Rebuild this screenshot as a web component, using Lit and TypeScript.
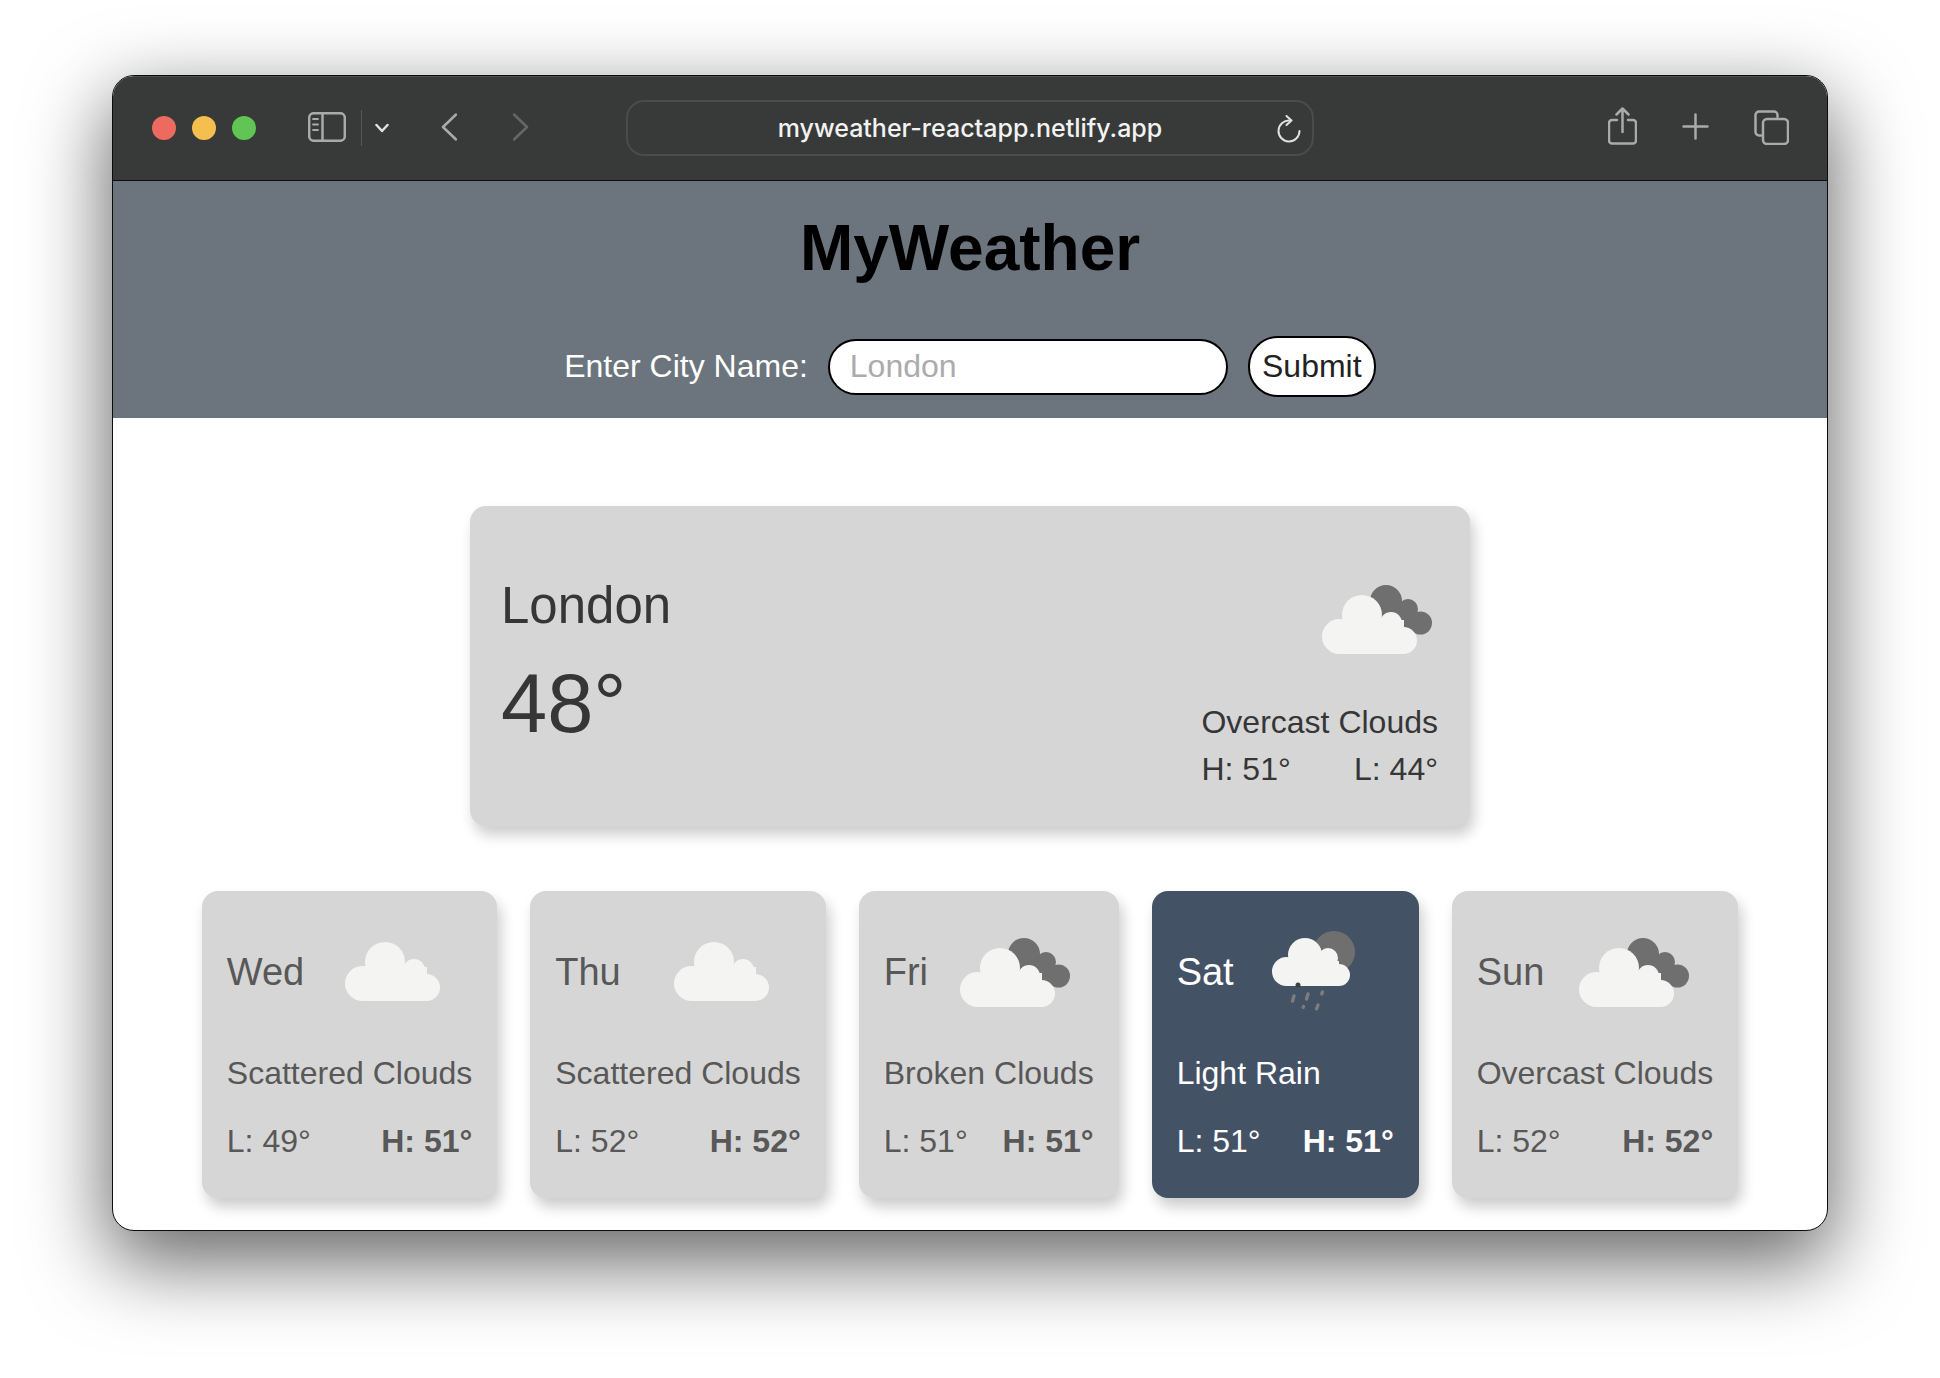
import { LitElement, css, html, svg } from "lit";
import { customElement, property } from "lit/decorators.js";

type IconKind = "scattered" | "overcast" | "rain";

const whiteCloud = svg`
  <g fill="#f4f4f3">
    <circle cx="73" cy="45" r="20" />
    <circle cx="102" cy="53" r="11" />
    <circle cx="50.5" cy="66.5" r="17.5" />
    <circle cx="114.5" cy="70.5" r="13.5" />
    <rect x="50" y="50" width="65" height="34" />
  </g>
`;

const iconParts: Record<IconKind, unknown> = {
  scattered: whiteCloud,
  overcast: svg`
    <g fill="#6f6f6f">
      <circle cx="90" cy="37" r="16" />
      <circle cx="112" cy="45" r="10" />
      <circle cx="124.500" cy="59" r="11.500" />
      <path d="M85 45L101 41L119 49L128 60L115 70H85Z" />
    </g>
    <g transform="translate(-7 6)">${whiteCloud}</g>
  `,
  rain: svg`
    <circle cx="100" cy="35" r="21" fill="#6f6f6f" />
    <g transform="translate(1 0)">
      <g fill="#f4f4f3">
        <circle cx="70" cy="38" r="17" />
        <circle cx="93" cy="41" r="10" />
        <circle cx="51.5" cy="54.5" r="14.5" />
        <circle cx="104" cy="58" r="11" />
        <rect x="51" y="44" width="53" height="25" />
      </g>
      <circle cx="63" cy="68" r="2.5" fill="#3f3f3f" />
      <g stroke="#7d7d7d" stroke-width="3.4" stroke-linecap="round">
        <path d="M59 79l-1.5 5" />
        <path d="M73 77l-1.5 5" />
        <path d="M87.5 75l-.8 2" />
        <path d="M68.5 89.5l-.3 .8" />
        <path d="M83 88l-1.5 4" />
      </g>
    </g>
  `,
};

@customElement("weather-icon")
export class WeatherIcon extends LitElement {
  @property({ type: String }) kind: IconKind = "scattered";

  static styles = css`
    :host {
      display: block;
      flex: none;
      width: 160px;
      height: 110px;
    }
    svg {
      display: block;
    }
  `;

  render() {
    return html`<svg width="160" height="110" viewBox="0 0 160 110">${iconParts[this.kind]}</svg>`;
  }
}

const forecast: { day: string; icon: IconKind; desc: string; low: number; high: number; active?: boolean }[] = [
  { day: "Wed", icon: "scattered", desc: "Scattered Clouds", low: 49, high: 51 },
  { day: "Thu", icon: "scattered", desc: "Scattered Clouds", low: 52, high: 52 },
  { day: "Fri", icon: "overcast", desc: "Broken Clouds", low: 51, high: 51 },
  { day: "Sat", icon: "rain", desc: "Light Rain", low: 51, high: 51, active: true },
  { day: "Sun", icon: "overcast", desc: "Overcast Clouds", low: 52, high: 52 },
];

@customElement("app-root")
export class AppRoot extends LitElement {
  static styles = css`
    :host {
      display: block;
      width: 1940px;
      height: 1378px;
      overflow: hidden;
      background: #fff;
      font-family: "Liberation Sans", Arial, sans-serif;
      box-sizing: border-box;
      padding: 75px 112px 0;
    }
    .window {
      height: 1156px;
      box-sizing: border-box;
      border: 1px solid #0c0c0c;
      border-radius: 22px;
      box-shadow: 0 28px 80px 4px rgba(0, 0, 0, 0.6);
      background: #fff;
      overflow: hidden;
    }

    .toolbar {
      height: 105px;
      box-sizing: border-box;
      display: flex;
      align-items: center;
      padding-left: 39px;
      background: #383a39;
      border-bottom: 1px solid #0c0c0c;
      box-shadow: inset 0 1px 0 rgba(255, 255, 255, 0.1);
    }
    .light {
      width: 24px;
      height: 24px;
      border-radius: 50%;
      margin-right: 16px;
    }
    .red { background: #ed6a5e; }
    .yellow { background: #f5bf4f; }
    .green { background: #61c554; }
    .toolbar svg {
      display: block;
      flex: none;
      fill: none;
      stroke: #a9aaaa;
      stroke-width: 2.5;
      stroke-linecap: round;
      stroke-linejoin: round;
    }
    .sidebar { margin: 0 0 2px 36px; }
    .divider {
      width: 1px;
      height: 36px;
      margin-left: 15px;
      background: #555756;
    }
    .chev { margin-left: 13px; }
    .toolbar svg.chev { stroke: #e0e0e0; }
    .back { margin: 0 0 2px 52px; }
    .forward { margin: 0 0 2px 56px; }
    .toolbar svg.forward { stroke: #656766; }
    .url {
      position: relative;
      flex: none;
      width: 688px;
      height: 56px;
      margin-left: 97px;
      box-sizing: border-box;
      border: 2px solid #4a4c4b;
      border-radius: 18px;
      display: flex;
      align-items: center;
      justify-content: center;
      color: #f2f2f2;
      font-family: Inter, "Liberation Sans", sans-serif;
      font-weight: 500;
      font-size: 25px;
      line-height: 54px;
    }
    .toolbar svg.reload {
      position: absolute;
      right: 11px;
      top: 13px;
      stroke: #e0e0e0;
      stroke-width: 2;
    }
    .share { margin: 0 0 4px 294px; }
    .plus { margin: 0 0 3px 45px; }
    .tabs { margin: 0 0 1px 45px; }

    header {
      background: #6c757d;
      height: 237px;
      box-sizing: border-box;
      padding-top: 30px;
      display: flex;
      flex-direction: column;
      align-items: center;
    }
    h1 {
      margin: 0;
      font-size: 64px;
      line-height: 74px;
      font-weight: 700;
      color: #000;
    }
    form {
      margin-top: 51px;
      display: flex;
      align-items: center;
      gap: 20px;
      font-size: 32px;
      color: #fff;
    }
    input {
      width: 400px;
      height: 56px;
      box-sizing: border-box;
      padding: 0 20px;
      border: 2.5px solid #000;
      border-radius: 28px;
      background: #fff;
      font: inherit;
      outline: none;
    }
    input::placeholder {
      color: #ababab;
      opacity: 1;
    }
    button {
      width: 128px;
      height: 61px;
      box-sizing: border-box;
      padding: 0;
      border: 2px solid #000;
      border-radius: 30px;
      background: #fff;
      color: #222;
      font: inherit;
    }

    main {
      padding-top: 88px;
      display: flex;
      flex-direction: column;
      align-items: center;
    }
    .current {
      width: 1000px;
      height: 320px;
      box-sizing: border-box;
      padding: 58px 32px 0 31px;
      display: flex;
      justify-content: space-between;
      background: #d6d6d6;
      border-radius: 16px;
      box-shadow: 4px 9px 14px rgba(0, 0, 0, 0.2);
      color: #363636;
    }
    .city {
      margin-top: 12px;
      font-size: 51px;
      line-height: 60px;
    }
    .temp {
      margin-top: 22px;
      font-size: 83px;
      line-height: 92px;
    }
    .now {
      display: flex;
      flex-direction: column;
      font-size: 32px;
      line-height: 37px;
    }
    .now weather-icon {
      align-self: flex-end;
      margin-right: -18px;
      margin-bottom: 30px;
    }
    .range {
      margin-top: 10px;
      display: flex;
      justify-content: space-between;
    }

    .days {
      margin-top: 65px;
      display: flex;
      gap: 33px;
    }
    .day {
      box-sizing: border-box;
      height: 307px;
      padding: 26px 25px 0;
      background: #d6d6d6;
      border-radius: 16px;
      box-shadow: 4px 9px 14px rgba(0, 0, 0, 0.2);
      color: #585858;
      font-size: 32px;
      line-height: 37px;
    }
    .day.active {
      background: #445266;
      color: #fff;
    }
    .day-head {
      height: 110px;
      display: flex;
      align-items: center;
      justify-content: space-between;
      font-size: 38px;
    }
    .desc {
      margin-top: 28px;
    }
    .lows {
      margin-top: 31px;
      display: flex;
      justify-content: space-between;
    }
    .lows b {
      font-weight: 700;
    }
  `;

  render() {
    return html`
      <div class="window">
        <div class="toolbar">
          <span class="light red"></span>
          <span class="light yellow"></span>
          <span class="light green"></span>
          <svg class="sidebar" width="38" height="30" viewBox="0 0 38 30">
            <rect x="1.2" y="1.2" width="35.6" height="27.6" rx="4.5" />
            <path d="M14.5 1.5v27" />
            <path stroke-width="1.8" d="M5 7h5M5 12.5h5M5 18h5" />
          </svg>
          <span class="divider"></span>
          <svg class="chev" width="14" height="10" viewBox="0 0 14 10">
            <path d="M1.5 2l5.5 6 5.5-6" />
          </svg>
          <svg class="back" width="16" height="28" viewBox="0 0 16 28">
            <path d="M15 1.5L2 14l13 12.5" />
          </svg>
          <svg class="forward" width="16" height="28" viewBox="0 0 16 28">
            <path d="M1 1.5L14 14 1 26.5" />
          </svg>
          <div class="url">
            myweather-reactapp.netlify.app
            <svg class="reload" width="24" height="28" viewBox="0 0 24 28">
              <path d="M13 5.5a10.5 10.5 0 1 0 9.5 10.5" />
              <path d="M9.5 1l5 4.5-5 4.5" />
            </svg>
          </div>
          <svg class="share" width="29" height="38" viewBox="0 0 29 38">
            <path d="M9 13H4a3 3 0 0 0-3 3v17.500a3 3 0 0 0 3 3h21a3 3 0 0 0 3-3V16a3 3 0 0 0-3-3h-5" />
            <path d="M14.500 25V2M8.500 7.500l6-6 6 6" />
          </svg>
          <svg class="plus" width="27" height="27" viewBox="0 0 27 27">
            <path d="M13.500 1.500v24M1.500 13.500h24" />
          </svg>
          <svg class="tabs" width="35" height="35" viewBox="0 0 35 35">
            <path d="M7 25.500H5a3.500 3.500 0 0 1-3.500-3.500V5A3.500 3.500 0 0 1 5 1.500h15a3.500 3.500 0 0 1 3.500 3.500v2" />
            <rect x="9" y="9" width="25" height="25" rx="4" />
          </svg>
        </div>

        <header>
          <h1>MyWeather</h1>
          <form>
            <label for="city">Enter City Name:</label>
            <input id="city" type="text" placeholder="London" />
            <button type="button">Submit</button>
          </form>
        </header>

        <main>
          <section class="current">
            <div>
              <div class="city">London</div>
              <div class="temp">48°</div>
            </div>
            <div class="now">
              <weather-icon kind="overcast"></weather-icon>
              <div>Overcast Clouds</div>
              <div class="range"><span>H: 51°</span><span>L: 44°</span></div>
            </div>
          </section>

          <section class="days">
            ${forecast.map(
              (d) => html`
                <div class="day ${d.active ? "active" : ""}">
                  <div class="day-head">
                    <span>${d.day}</span>
                    <weather-icon .kind=${d.icon}></weather-icon>
                  </div>
                  <div class="desc">${d.desc}</div>
                  <div class="lows"><span>L: ${d.low}°</span><b>H: ${d.high}°</b></div>
                </div>
              `,
            )}
          </section>
        </main>
      </div>
    `;
  }
}
